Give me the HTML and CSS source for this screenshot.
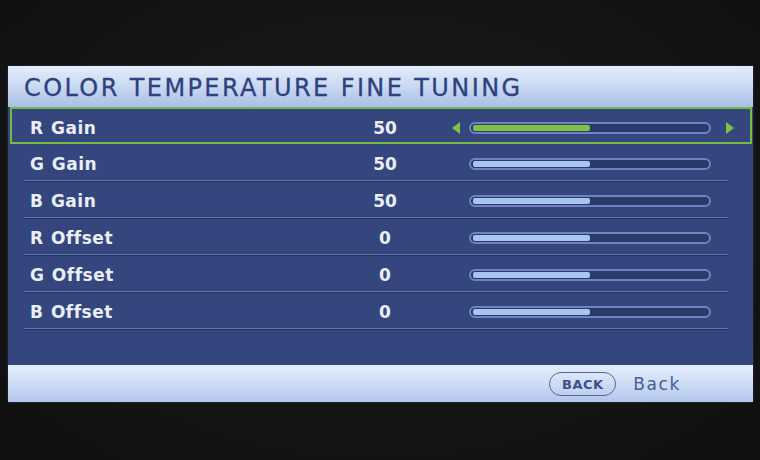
FILE: index.html
```html
<!DOCTYPE html>
<html>
<head>
<meta charset="utf-8">
<link rel="stylesheet" href="styles.css">
</head>
<body>
<div class="screen">
  <div class="osd">
    <div class="osd-header">COLOR TEMPERATURE FINE TUNING</div>
    <div class="osd-rows">
      <div class="row selected">
        <span class="label">R Gain</span>
        <span class="value">50</span>
        <span class="arrow-cell left"><span class="arrow arrow-left"></span></span>
        <span class="track"><span class="fill" style="width:50%"></span></span>
        <span class="arrow-cell right"><span class="arrow arrow-right"></span></span>
      </div>
      <div class="row">
        <span class="label">G Gain</span>
        <span class="value">50</span>
        <span class="arrow-cell left"></span>
        <span class="track"><span class="fill" style="width:50%"></span></span>
        <span class="arrow-cell right"></span>
      </div>
      <div class="row">
        <span class="label">B Gain</span>
        <span class="value">50</span>
        <span class="arrow-cell left"></span>
        <span class="track"><span class="fill" style="width:50%"></span></span>
        <span class="arrow-cell right"></span>
      </div>
      <div class="row">
        <span class="label">R Offset</span>
        <span class="value">0</span>
        <span class="arrow-cell left"></span>
        <span class="track"><span class="fill" style="width:50%"></span></span>
        <span class="arrow-cell right"></span>
      </div>
      <div class="row">
        <span class="label">G Offset</span>
        <span class="value">0</span>
        <span class="arrow-cell left"></span>
        <span class="track"><span class="fill" style="width:50%"></span></span>
        <span class="arrow-cell right"></span>
      </div>
      <div class="row">
        <span class="label">B Offset</span>
        <span class="value">0</span>
        <span class="arrow-cell left"></span>
        <span class="track"><span class="fill" style="width:50%"></span></span>
        <span class="arrow-cell right"></span>
      </div>
    </div>
    <div class="osd-footer">
      <span class="key-pill">BACK</span>
      <span class="key-label">Back</span>
    </div>
  </div>
</div>
</body>
</html>
```

FILE: styles.css
```css
html, body {
  margin: 0;
  padding: 0;
}

body {
  width: 760px;
  height: 460px;
  background: #141414;
  overflow: hidden;
  font-family: "DejaVu Sans", Verdana, sans-serif;
}

.screen {
  padding: 66px 0 0 8px;
  background: radial-gradient(ellipse at 50% 45%, #1c1c1c 0%, #131313 70%, #0f0f0f 100%);
  height: 394px;
}

.osd {
  width: 745px;
  height: 336px;
  display: flex;
  flex-direction: column;
  background: #35467e;
  box-shadow: 0 0 2px rgba(120, 140, 200, 0.35);
}

.osd-header {
  height: 41px;
  box-sizing: border-box;
  padding: 8px 0 0 16px;
  background: linear-gradient(to bottom, #e3edfb 0%, #c9d9f3 50%, #a9bfe6 100%);
  color: #2f417e;
  font-size: 24px;
  letter-spacing: 2.4px;
  line-height: 28px;
  white-space: nowrap;
  -webkit-text-stroke: 0.3px #2f417e;
}

.osd-rows {
  height: 258px;
  display: flex;
  flex-direction: column;
}

.row {
  position: relative;
  height: 37px;
  box-sizing: border-box;
  margin: 0 1px 0 2px;
  border: 2px solid transparent;
  padding: 2px 0 0 18px;
  display: grid;
  grid-template-columns: 325px 60px 54px 242px 22px;
  align-items: center;
  color: #e9eef9;
}

.row::after {
  content: "";
  position: absolute;
  left: 12px;
  right: 22px;
  bottom: -2px;
  height: 1px;
  background: #6075ad;
  box-shadow: 0 1px 0 rgba(30, 40, 80, 0.6);
}

.row.selected {
  border-color: #74ba43;
  padding-top: 4px;
}

.row.selected::after {
  display: none;
}

.label {
  font-weight: bold;
  font-size: 17px;
  letter-spacing: 0.5px;
  word-spacing: 1px;
}

.value {
  font-weight: bold;
  font-size: 17px;
  text-align: center;
}

.arrow-cell {
  display: flex;
  align-items: center;
  height: 14px;
}

.arrow-cell.left {
  justify-content: flex-end;
  padding-right: 9px;
}

.arrow-cell.right {
  justify-content: flex-start;
  padding-left: 15px;
}

.arrow {
  width: 0;
  height: 0;
  border-top: 6px solid transparent;
  border-bottom: 6px solid transparent;
}

.arrow-left {
  border-right: 8px solid #7cc247;
}

.arrow-right {
  border-left: 8px solid #7cc247;
}

.track {
  display: flex;
  align-items: center;
  height: 12px;
  box-sizing: border-box;
  border: 2px solid #6e84bf;
  border-radius: 6px;
  background: #2b396b;
  padding: 0 2px;
}

.fill {
  display: block;
  height: 6px;
  border-radius: 2px;
  background: #a8c5f1;
}

.row.selected .fill {
  background: #7dc344;
}

.osd-footer {
  height: 37px;
  margin-top: auto;
  box-sizing: border-box;
  display: flex;
  align-items: center;
  justify-content: flex-end;
  gap: 17px;
  padding: 1px 72px 0 0;
  background: linear-gradient(to bottom, #e4eefc 0%, #cbdaf4 55%, #b2c6ec 100%);
}

.key-pill {
  display: flex;
  align-items: center;
  justify-content: center;
  width: 67px;
  height: 24px;
  box-sizing: border-box;
  border: 1.5px solid #55669f;
  border-radius: 12px;
  color: #3e4f8c;
  font-weight: bold;
  font-size: 13px;
  letter-spacing: 0.5px;
}

.key-label {
  color: #4a5b96;
  font-size: 17px;
  letter-spacing: 1.6px;
}
```
